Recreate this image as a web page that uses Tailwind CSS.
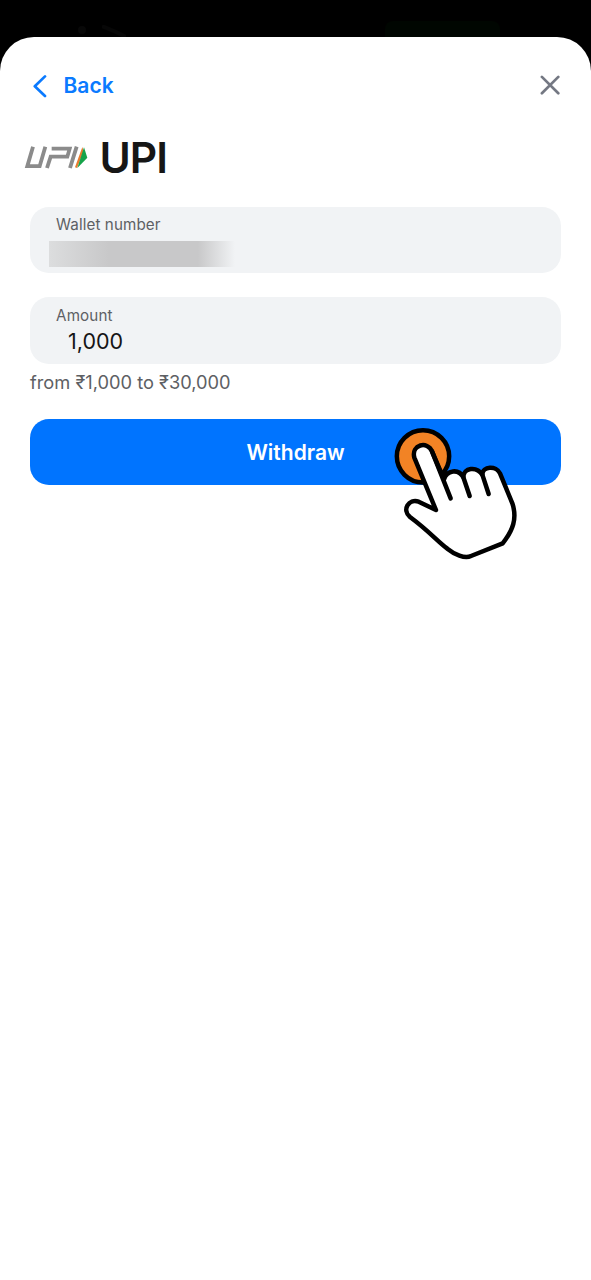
<!DOCTYPE html>
<html lang="en">
<head>
<meta charset="utf-8">
<title>Withdraw</title>
<script src="https://cdn.jsdelivr.net/npm/@tailwindcss/browser@4"></script>
</head>
<body class="bg-black font-['Inter','Noto_Sans',sans-serif]">
<div class="relative flex h-[1280px] w-[591px] flex-col overflow-hidden bg-black">
  <div class="flex h-[36.5px] shrink-0 items-end overflow-hidden pr-[91px] pl-[78px]">
    <div class="mb-[3px] size-2 rounded-full bg-[#080808]"></div>
    <svg class="ml-4 h-3 w-6" viewBox="0 0 24 12"><path d="M0 1L14 7L24 12" stroke="#070707" stroke-width="4" fill="none"/></svg>
    <div class="ml-auto h-4 w-[115px] rounded-t-lg bg-[#000601]"></div>
  </div>
  <main class="flex flex-1 flex-col rounded-t-[34px] bg-white px-[30px]">
    <header class="flex h-[97px] items-center justify-between text-[#0a7aff]">
      <div class="flex items-center gap-[17px]">
        <svg class="mt-[2px] ml-[3px] h-6 w-[14px]" viewBox="0 0 14 24" fill="none" stroke="currentColor" stroke-width="2.7" stroke-linecap="round" stroke-linejoin="round"><path d="M12 2.4L1.8 12.2L12 22"/></svg>
        <span class="mt-[2px] -ml-[0.5px] text-[21px] leading-7 font-semibold">Back</span>
      </div>
      <svg class="size-[21px]" viewBox="0 0 21 21" fill="none" stroke="#747883" stroke-width="2.7" stroke-linecap="round"><path d="M1.9 1.9L18.3 18.3M18.3 1.9L1.9 18.3"/></svg>
    </header>
    <div class="-ml-[15px] flex h-[49px] items-center">
      <svg class="h-[35px] w-[80px]" viewBox="0 30 240 105">
        <g fill="none" stroke="#8b8b8b" stroke-width="11.5">
          <path d="M54 47L37 105.5H74L91 47M96 111L107 77H157L164 53H110M185 47L165 111"/>
        </g>
        <path d="M202 48L180 109L186 111L206 61Z" fill="#e87b2e"/>
        <path d="M207 49L217 80L187 111Z" fill="#16a34a"/>
      </svg>
      <h1 class="-mt-[2px] ml-[4.5px] text-[42.5px] leading-[49px] font-semibold tracking-[-1px] text-[#161616]">UPI</h1>
    </div>
    <div class="mt-6 h-[66.5px] rounded-[19px] bg-[#f1f3f5] pt-2 pl-[26px]">
      <div class="text-[15.2px] leading-5 tracking-[0.1px] text-[#5d6064]">Wallet number</div>
      <div class="mt-[6px] -ml-[7px] h-[26px] w-[186px] bg-linear-to-r from-[#c8c8c9] from-80% to-[#f1f3f5]">
        <div class="h-full w-[60px] bg-linear-to-r from-[#dcddde] to-[#c8c8c9]"></div>
      </div>
    </div>
    <div class="mt-6 h-[66.5px] rounded-[19px] bg-[#f1f3f5] pt-[9px] pl-[26px]">
      <div class="text-[15.2px] leading-5 tracking-[0.15px] text-[#5d6064]">Amount</div>
      <div class="mt-px ml-3 text-[21.5px] leading-7 text-[#151515]">1,000</div>
    </div>
    <div class="mt-[6px] text-[18.25px] leading-6 text-[#5d6064]">from ₹1,000 to ₹30,000</div>
    <button class="mt-[25px] h-[66.5px] rounded-[19px] bg-[#0074ff] pt-[2px] text-[21px] font-semibold text-white">Withdraw</button>
  </main>
  <svg class="absolute top-[410px] left-[380px] h-[160px] w-[190px]" viewBox="0 0 570 480" stroke="#000" stroke-width="13.5" stroke-linecap="round" stroke-linejoin="round">
    <circle cx="129" cy="139" r="78.5" fill="#f28325"/>
    <path d="M168 300L103 143C93 103 143 92 156 124L192 208C200 180 236 175 250 202C250 172 290 168 307 194C307 168 349 166 360 190L397 280C412 325 399 361 368 400L273 438C254 447 223 433 202 416C170 392 148 364 90 321C65 300 86 265 116 275Z" fill="#fff"/>
    <path d="M156 124L212 265M250 202L269 258M307 194L326 252" fill="none"/>
  </svg>
</div>
</body>
</html>
